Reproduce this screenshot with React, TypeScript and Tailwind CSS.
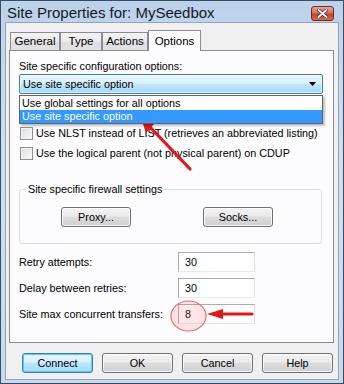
import React from "react";

const btn =
  "flex h-[20px] w-[72px] items-center justify-center rounded-[3px] border border-[#707070] bg-[linear-gradient(#f2f2f2_0%,#ebebeb_45%,#dddddd_50%,#cfcfcf_100%)] shadow-[inset_0_0_0_1px_rgba(255,255,255,0.8)]";

const smallBtn =
  "flex h-[20px] w-[70px] items-center justify-center rounded-[3px] border border-[#707070] bg-[linear-gradient(#f2f2f2_0%,#ebebeb_45%,#dddddd_50%,#cfcfcf_100%)] shadow-[inset_0_0_0_1px_rgba(255,255,255,0.8)]";

const field =
  "flex h-[20px] w-[77px] items-center border border-[#abadb3] border-r-[#dbdfe6] border-b-[#e3e9ef] bg-white pl-[6px]";

function Checkbox({ label }: { label: string }) {
  return (
    <div className="flex h-[13px] items-center gap-[3px]">
      <span className="h-[13px] w-[13px] border border-[#8e8f8f] bg-[linear-gradient(135deg,#dcdcdc,#fbfbfb)] shadow-[inset_0_0_0_1px_#f4f4f4]" />
      <span>{label}</span>
    </div>
  );
}

function Tab({ label, width, active }: { label: string; width: string; active?: boolean }) {
  if (active) {
    return (
      <div
        className={`relative z-10 -mb-px flex h-[21px] ${width} items-start justify-center border border-b-0 border-[#898c95] bg-[#fcfcfe] pt-[2px]`}
      >
        {label}
      </div>
    );
  }
  return (
    <div
      className={`flex h-[18px] ${width} items-center justify-center border border-b-0 border-[#898c95] bg-[linear-gradient(#f3f3f3,#ebebeb_50%,#dedede_50%,#e3e3e3)] pt-[1px]`}
    >
      {label}
    </div>
  );
}

function Overlay() {
  return (
    <svg className="pointer-events-none absolute left-0 top-0" width="344" height="384">
      <line x1="189" y1="168" x2="148" y2="125" stroke="#e8141a" strokeWidth="3.2" strokeLinecap="round" />
      <polygon points="140,117 154,122 145,132" fill="#e8141a" />
      <ellipse cx="187.5" cy="315" rx="17.5" ry="15" fill="rgba(255,80,80,0.14)" stroke="#ee6a6a" strokeWidth="1.2" />
      <line x1="216" y1="313" x2="251" y2="313" stroke="#e8141a" strokeWidth="3.2" strokeLinecap="round" />
      <polygon points="206,313 222,308 222,318" fill="#e8141a" />
    </svg>
  );
}

export default function App() {
  return (
    <div
      className="relative flex h-[384px] w-[344px] flex-col border border-[#3b4b5e] bg-[linear-gradient(#bcd1ea,#cfe0f2_40%,#c7daef)] text-[10.8px] text-black"
      style={{ fontFamily: '"Liberation Sans", Arial, sans-serif' }}
    >
      {/* title bar */}
      <div className="flex h-[21px] shrink-0 items-center justify-between pl-[6px] pr-[9px]">
        <span className="mt-[2px] text-[15px] leading-none text-[#0f1a2a]">Site Properties for: MySeedbox</span>
        <div className="mt-[3px] flex h-[15px] w-[23px] items-center justify-center rounded-[3px] border border-[#6e2a26] bg-[linear-gradient(#e8a594,#d8715e_45%,#c7402c_55%,#d86a4e)]">
          <svg width="11" height="9" viewBox="0 0 11 9">
            <path d="M1.5 1 L9.5 8 M9.5 1 L1.5 8" stroke="#3a1410" strokeWidth="3.2" strokeLinecap="round" />
            <path d="M1.5 1 L9.5 8 M9.5 1 L1.5 8" stroke="#fff" strokeWidth="2" strokeLinecap="round" />
          </svg>
        </div>
      </div>

      {/* client area */}
      <div className="mx-[4px] mb-[3px] flex flex-1 flex-col border border-[#8fa5bd] bg-[#f0f0f0] pl-[3px] pr-[5px] pt-[7px]">
        <div className="flex items-end pl-[1px] text-[11.5px]">
          <Tab label="General" width="w-[50px]" />
          <Tab label="Type" width="w-[42px]" />
          <Tab label="Actions" width="w-[46px]" />
          <Tab label="Options" width="w-[53px]" active />
        </div>

        {/* tab page */}
        <div className="relative flex h-[293px] w-[325px] flex-col border border-[#898c95] bg-[#fcfcfe] pl-[9px]">
          <div className="mt-[9px] leading-[13px]">Site specific configuration options:</div>

          <div className="relative mt-[1px] w-[304px]">
            <div className="flex h-[20px] items-center justify-between rounded-[2px] border border-[#3c7fb1] bg-[linear-gradient(#eaf6fd,#d9f0fc_50%,#bee6fd_50%,#a7d9f5)] pl-[3px] pr-[6px] shadow-[inset_0_0_0_1px_rgba(255,255,255,0.6)]">
              <span>Use site specific option</span>
              <svg width="7" height="4" viewBox="0 0 7 4">
                <path d="M0 0 H7 L3.5 4 Z" fill="#000" />
              </svg>
            </div>
            <div className="absolute left-0 top-[21px] z-10 w-[304px] border border-[#646464] bg-white shadow-[2px_2px_2px_rgba(0,0,0,0.25)]">
              <div className="flex h-[14px] items-center pl-[2px]">Use global settings for all options</div>
              <div className="flex h-[13px] items-center bg-[#3399ff] pl-[2px] text-white">Use site specific option</div>
            </div>
          </div>

          <div className="ml-[1px] mt-[33px] flex flex-col gap-[7px]">
            <Checkbox label="Use NLST instead of LIST (retrieves an abbreviated listing)" />
            <Checkbox label="Use the logical parent (not physical parent) on CDUP" />
          </div>

          {/* firewall group */}
          <div className="relative mt-[29px] flex h-[55px] w-[303px] items-start rounded-[3px] border border-[#d5dfe5] pt-[17px]">
            <span className="absolute -top-[8px] left-[6px] bg-[#fcfcfe] px-[2px] leading-[14px]">
              Site specific firewall settings
            </span>
            <div className="ml-[41px] flex gap-[72px]">
              <div className={smallBtn}>Proxy...</div>
              <div className={smallBtn}>Socks...</div>
            </div>
          </div>

          <div className="mt-[8px] flex w-[236px] items-center justify-between">
            <span>Retry attempts:</span>
            <div className={field}>30</div>
          </div>
          <div className="mt-[6px] flex w-[236px] items-center justify-between">
            <span>Delay between retries:</span>
            <div className={field}>30</div>
          </div>
          <div className="mt-[6px] flex w-[236px] items-center justify-between">
            <span>Site max concurrent transfers:</span>
            <div className={field}>8</div>
          </div>
        </div>

        {/* buttons */}
        <div className="mt-[10px] flex gap-[9px] pl-[13px]">
          <div className="flex h-[20px] w-[72px] items-center justify-center rounded-[3px] border border-[#3c7fb1] bg-[linear-gradient(#eaf6fd,#d9f0fc_45%,#bee6fd_50%,#a7d9f5)] shadow-[inset_0_0_0_1px_#48d1ff]">
            Connect
          </div>
          <div className={btn}>OK</div>
          <div className={btn}>Cancel</div>
          <div className={btn}>Help</div>
        </div>
      </div>

      <Overlay />
    </div>
  );
}
